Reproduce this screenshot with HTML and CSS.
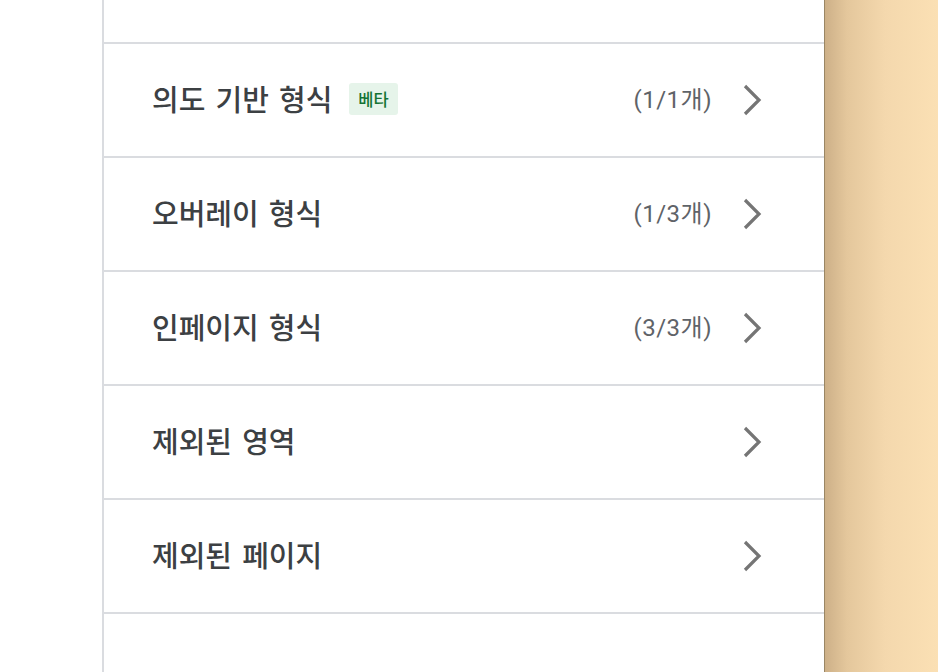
FILE: index.html
```html
<!DOCTYPE html>
<html lang="ko">
<head>
<meta charset="utf-8">
<link rel="stylesheet" href="styles.css">
</head>
<body>
<div class="page">
  <div class="gutter"></div>
  <div class="panel">
    <div class="top"></div>
    <div class="row">
      <div class="label">의도 기반 형식<span class="badge">베타</span></div>
      <div class="count">(1/1개)</div>
      <svg class="chev" width="22" height="32" viewBox="0 0 22 32"><path d="M3 2 L17 16 L3 30" fill="none" stroke="#757575" stroke-width="3.2"/></svg>
    </div>
    <div class="row">
      <div class="label">오버레이 형식</div>
      <div class="count">(1/3개)</div>
      <svg class="chev" width="22" height="32" viewBox="0 0 22 32"><path d="M3 2 L17 16 L3 30" fill="none" stroke="#757575" stroke-width="3.2"/></svg>
    </div>
    <div class="row">
      <div class="label">인페이지 형식</div>
      <div class="count">(3/3개)</div>
      <svg class="chev" width="22" height="32" viewBox="0 0 22 32"><path d="M3 2 L17 16 L3 30" fill="none" stroke="#757575" stroke-width="3.2"/></svg>
    </div>
    <div class="row">
      <div class="label">제외된 영역</div>
      <div class="count"></div>
      <svg class="chev" width="22" height="32" viewBox="0 0 22 32"><path d="M3 2 L17 16 L3 30" fill="none" stroke="#757575" stroke-width="3.2"/></svg>
    </div>
    <div class="row">
      <div class="label">제외된 페이지</div>
      <div class="count"></div>
      <svg class="chev" width="22" height="32" viewBox="0 0 22 32"><path d="M3 2 L17 16 L3 30" fill="none" stroke="#757575" stroke-width="3.2"/></svg>
    </div>
  </div>
  <div class="side"></div>
</div>
</body>
</html>
```
FILE: styles.css
```css
html, body {
  margin: 0;
  padding: 0;
  height: 100%;
  overflow: hidden;
}
body {
  font-family: Roboto, "Noto Sans CJK KR", sans-serif;
  background: #fff;
}
.page {
  display: flex;
  height: 672px;
}
.gutter {
  width: 102px;
  flex: none;
  background: #fff;
}
.panel {
  width: 720px;
  flex: none;
  border-left: 2px solid #dadce0;
  background: #fff;
  display: flex;
  flex-direction: column;
}
.top {
  height: 42px;
  border-bottom: 2px solid #dadce0;
}
.row {
  height: 112px;
  border-bottom: 2px solid #dadce0;
  display: flex;
  align-items: center;
  padding: 0 60px 0 48px;
}
.label {
  flex: 1;
  font-family: "Noto Sans CJK KR", sans-serif;
  font-size: 29px;
  font-weight: 500;
  color: #3c4043;
  display: flex;
  align-items: center;
  line-height: 36px;
  margin-top: -5px;
  word-spacing: 2px;
  white-space: pre;
}
.badge {
  margin-left: 17px;
  background: #e6f4ea;
  color: #137333;
  font-size: 16.5px;
  font-weight: 500;
  border-radius: 3px;
  padding: 0 9px;
  height: 32px;
  line-height: 32px;
  display: inline-block;
  margin-top: 2px;
  word-spacing: 0;
}
.count {
  font-family: Roboto, "Noto Sans CJK KR", sans-serif;
  font-size: 24px;
  letter-spacing: 0.5px;
  color: #5f6368;
  margin-right: 30px;
  margin-top: -5px;
}
.chev {
  flex: none;
  display: block;
}
.side {
  flex: 1;
  border-left: 1px solid #9a8664;
  background: linear-gradient(to right, #cdb088 0px, #e4c79c 22px, #f4d8ad 60px, #fbe0b4 114px);
}
```
